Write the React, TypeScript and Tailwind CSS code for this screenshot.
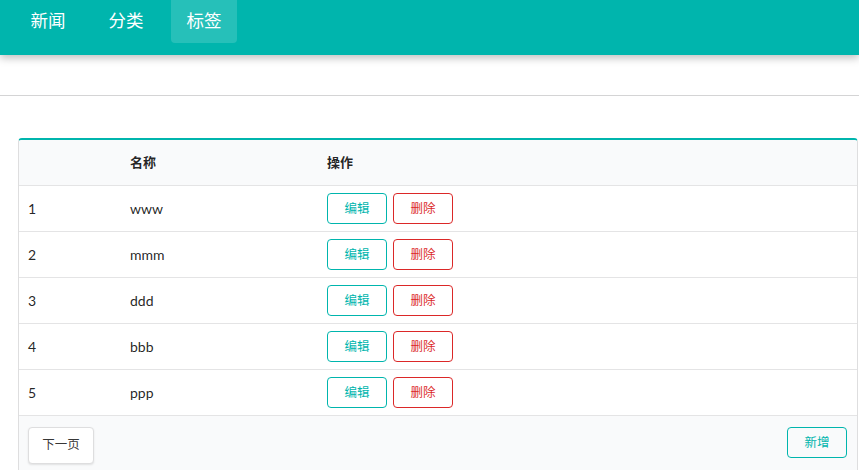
const tags = [
  { id: 1, name: "www" },
  { id: 2, name: "mmm" },
  { id: 3, name: "ddd" },
  { id: 4, name: "bbb" },
  { id: 5, name: "ppp" },
];

const navItems = [
  { label: "新闻", active: false },
  { label: "分类", active: false },
  { label: "标签", active: true },
];

export default function App() {
  return (
    <div
      className="min-h-[470px] bg-white text-[14px] text-[#000000de]"
      style={{ fontFamily: "Lato, 'Noto Sans CJK SC', sans-serif" }}
    >
      <header className="relative z-10 flex h-[55px] items-start gap-3 bg-[#00b5ad] pl-[15px] shadow-[0_3px_8px_rgba(0,0,0,0.25)]">
        {navItems.map((item) => (
          <a
            key={item.label}
            className={
              "flex h-[43px] w-[66px] items-center justify-center rounded-b-[4px] text-[17.5px] text-white " +
              (item.active ? "bg-white/15" : "")
            }
          >
            {item.label}
          </a>
        ))}
      </header>

      <div className="h-[40px]" />
      <hr className="border-t border-[#d4d4d5]" />

      <div className="ml-[18px] mr-[1px] mt-[42px] overflow-hidden rounded-[4px] border border-t-2 border-[#dededf] border-t-[#00b5ad]">
        <table className="w-full border-collapse">
          <thead>
            <tr className="h-[45px] border-b border-[#e4e4e5] bg-[#f9fafb] text-left text-[13px] font-bold">
              <th className="w-[101px] pl-[9px]"></th>
              <th className="w-[197px] pl-[10px]">名称</th>
              <th className="pl-[10px]">操作</th>
            </tr>
          </thead>
          <tbody>
            {tags.map((t) => (
              <tr key={t.id} className="h-[46px] border-b border-[#e4e4e5]">
                <td className="pl-[9px]">{t.id}</td>
                <td className="pl-[10px]">{t.name}</td>
                <td className="pl-[10px]">
                  <div className="flex gap-[6px]">
                    <button className="h-[31px] w-[60px] rounded-[4px] border border-[#00b5ad] bg-white pt-[2px] text-[12.5px] text-[#00b5ad]">
                      编辑
                    </button>
                    <button className="h-[31px] w-[60px] rounded-[4px] border border-[#db2828] bg-white pt-[2px] text-[12.5px] text-[#db2828]">
                      删除
                    </button>
                  </div>
                </td>
              </tr>
            ))}
          </tbody>
        </table>
        <div className="flex items-start justify-between bg-[#f9fafb] pb-[10px] pl-[9px] pr-[10px] pt-[11px]">
          <button className="h-[37px] w-[66px] rounded-[4px] border border-[#dededf] bg-white text-[12.5px] text-[#000000cc] shadow-[0_1px_2px_rgba(0,0,0,0.1)]">
            下一页
          </button>
          <button className="h-[31px] w-[60px] rounded-[4px] border border-[#00b5ad] bg-transparent pt-[2px] text-[12.5px] text-[#00b5ad]">
            新增
          </button>
        </div>
      </div>
    </div>
  );
}
